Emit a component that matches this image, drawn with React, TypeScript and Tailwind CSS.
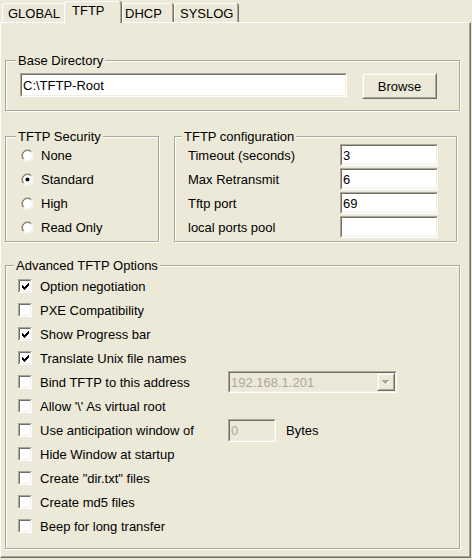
import React from "react";

type Kids = { children?: React.ReactNode; className?: string };

const Sunken = ({ children, className }: Kids) => (
  <div className={`border border-t-[#ACA899] border-l-[#ACA899] border-b-white border-r-white ${className}`}>
    <div className="h-full flex items-center border border-t-[#716F64] border-l-[#716F64] border-b-[#F1EFE2] border-r-[#F1EFE2]">
      {children}
    </div>
  </div>
);

const Raised = ({ children, className }: Kids) => (
  <div className={`border border-t-[#F1EFE2] border-l-[#F1EFE2] border-b-[#716F64] border-r-[#716F64] ${className}`}>
    <div className="h-full flex items-center justify-center border border-t-white border-l-white border-b-[#ACA899] border-r-[#ACA899]">
      {children}
    </div>
  </div>
);

const CheckMark = () => (
  <svg width="7" height="7" viewBox="0 0 7 7" shapeRendering="crispEdges">
    <path
      d="M0 2h1v3H0zM1 3h1v3H1zM2 4h1v3H2zM3 3h1v3H3zM4 2h1v3H4zM5 1h1v3H5zM6 0h1v3H6z"
      fill="#000"
    />
  </svg>
);

const CheckBox = ({ checked }: { checked?: boolean }) => (
  <div className="w-[14px] h-[14px] shrink-0 border border-t-[#ACA899] border-l-[#ACA899] border-b-white border-r-white">
    <div className="w-full h-full flex items-center justify-center bg-white border border-t-[#716F64] border-l-[#716F64] border-b-[#F1EFE2] border-r-[#F1EFE2]">
      {checked && <CheckMark />}
    </div>
  </div>
);

const Radio = ({ checked }: { checked?: boolean }) => (
  <svg width="13" height="13" viewBox="0 0 13 13" className="shrink-0">
    <circle cx="6.5" cy="6.5" r="5.5" fill="#fff" />
    <path d="M2.26 10.74A6 6 0 0 1 10.74 2.26" stroke="#ACA899" fill="none" />
    <path d="M2.96 10.04A5 5 0 0 1 10.04 2.96" stroke="#716F64" fill="none" />
    <path d="M10.74 2.26A6 6 0 0 1 2.26 10.74" stroke="#fff" fill="none" />
    <path d="M10.04 2.96A5 5 0 0 1 2.96 10.04" stroke="#F1EFE2" fill="none" />
    {checked && <circle cx="6.5" cy="6.5" r="2" fill="#000" />}
  </svg>
);

const DownArrow = () => (
  <svg width="8" height="5" viewBox="0 0 8 5" shapeRendering="crispEdges">
    <path d="M1 1h7v1H1zM2 2h5v1H2zM3 3h3v1H3zM4 4h1v1H4z" fill="#fff" />
    <path d="M0 0h7v1H0zM1 1h5v1H1zM2 2h3v1H2zM3 3h1v1H3z" fill="#ACA899" />
  </svg>
);

type GroupProps = Kids & { title: string; legendClass: string; bodyClass: string };

const Group = ({ title, legendClass, bodyClass, className, children }: GroupProps) => (
  <fieldset
    className={`border border-[#ACA899] shadow-[1px_1px_0_#fff,inset_1px_1px_0_#fff] ${className}`}
  >
    <legend className={`leading-[13px] px-[2px] bg-[#ECE9D8] ${legendClass}`}>{title}</legend>
    <div className={bodyClass}>{children}</div>
  </fieldset>
);

const options = [
  { label: "Option negotiation", checked: true },
  { label: "PXE Compatibility" },
  { label: "Show Progress bar", checked: true },
  { label: "Translate Unix file names", checked: true },
  { label: "Bind TFTP to this address", extra: "bind" },
  { label: "Allow '\\' As virtual root" },
  { label: "Use anticipation window of", extra: "window" },
  { label: "Hide Window at startup" },
  { label: 'Create "dir.txt" files' },
  { label: "Create md5 files" },
  { label: "Beep for long transfer" },
];

const config = [
  { label: "Timeout (seconds)", value: "3" },
  { label: "Max Retransmit", value: "6" },
  { label: "Tftp port", value: "69" },
  { label: "local ports pool", value: "" },
];

export default function App() {
  return (
    <div className="w-[472px] h-[560px] bg-[#ECE9D8] text-black text-[13px] leading-[15px] font-['Liberation_Sans',Arial,sans-serif]">
      {/* tabs */}
      <div className="flex items-end h-[22px] pl-[2px]">
        <div className="w-[62px] h-[19px] pl-[5px] pt-[2px] border-l border-t border-white rounded-tl-[3px]">
          GLOBAL
        </div>
        <div className="relative z-10 -mb-px w-[57px] h-[22px] pl-[7px] pt-[1px] bg-[#ECE9D8] border-l border-t border-r border-white border-r-[#ACA899] rounded-t-[3px] shadow-[1px_0_0_#716F64]">
          TFTP
        </div>
        <div className="ml-px w-[51px] h-[19px] pl-[2px] pt-[2px] border-l border-t border-r border-white border-r-[#ACA899] rounded-t-[3px] shadow-[1px_0_0_#716F64]">
          DHCP
        </div>
        <div className="ml-px w-[64px] h-[19px] pl-[5px] pt-[2px] border-l border-t border-r border-white border-r-[#ACA899] rounded-t-[3px] shadow-[1px_0_0_#716F64]">
          SYSLOG
        </div>
      </div>

      {/* panel */}
      <div className="w-[471px] h-[536px] border border-t-white border-l-white border-r-[#716F64] border-b-[#716F64]">
        <div className="h-full pl-[4px] pt-[31px] border-r border-b border-r-[#ACA899] border-b-[#ACA899]">
          <Group
            title="Base Directory"
            legendClass="ml-[10px]"
            className="w-[455px]"
            bodyClass="flex items-start pt-[6px] pl-[14px] pb-[11px]"
          >
            <Sunken className="w-[327px] h-[24px] bg-white">
              <span className="pl-px">{"C:\\TFTP-Root"}</span>
            </Sunken>
            <Raised className="ml-[15px] w-[75px] h-[26px]">Browse</Raised>
          </Group>

          <div className="flex mt-[19px]">
            <Group title="TFTP Security" legendClass="ml-[10px]" className="w-[154px]" bodyClass="pl-[15px] pb-[2px]">
              {["None", "Standard", "High", "Read Only"].map((s) => (
                <div key={s} className="flex items-center h-[24px] gap-[7px]">
                  <Radio checked={s === "Standard"} />
                  <span>{s}</span>
                </div>
              ))}
            </Group>
            <Group
              title="TFTP configuration"
              legendClass="ml-[7px]"
              className="ml-[15px] w-[283px]"
              bodyClass="pl-[13px] pb-[2px]"
            >
              {config.map((c) => (
                <div key={c.label} className="flex items-center h-[24px]">
                  <span className="w-[152px]">{c.label}</span>
                  <Sunken className="w-[98px] h-[22px] bg-white">
                    <span className="pl-px">{c.value}</span>
                  </Sunken>
                </div>
              ))}
            </Group>
          </div>

          <Group
            title="Advanced TFTP Options"
            legendClass="ml-[8px]"
            className="mt-[17px] w-[455px]"
            bodyClass="pl-[12px] pt-[2px] pb-[10px]"
          >
            {options.map((o) => (
              <div key={o.label} className="flex items-center h-[24px]">
                <CheckBox checked={o.checked} />
                <span className="ml-[8px] w-[188px] whitespace-nowrap">{o.label}</span>
                {o.extra === "bind" && (
                  <Sunken className="w-[169px] h-[22px]">
                    <span className="flex-1 pl-px text-[#ACA899]">192.168.1.201</span>
                    <Raised className="w-[18px] h-full">
                      <DownArrow />
                    </Raised>
                  </Sunken>
                )}
                {o.extra === "window" && (
                  <>
                    <Sunken className="w-[48px] h-[23px]">
                      <span className="pl-px text-[#ACA899]">0</span>
                    </Sunken>
                    <span className="ml-[10px]">Bytes</span>
                  </>
                )}
              </div>
            ))}
          </Group>
        </div>
      </div>
    </div>
  );
}
